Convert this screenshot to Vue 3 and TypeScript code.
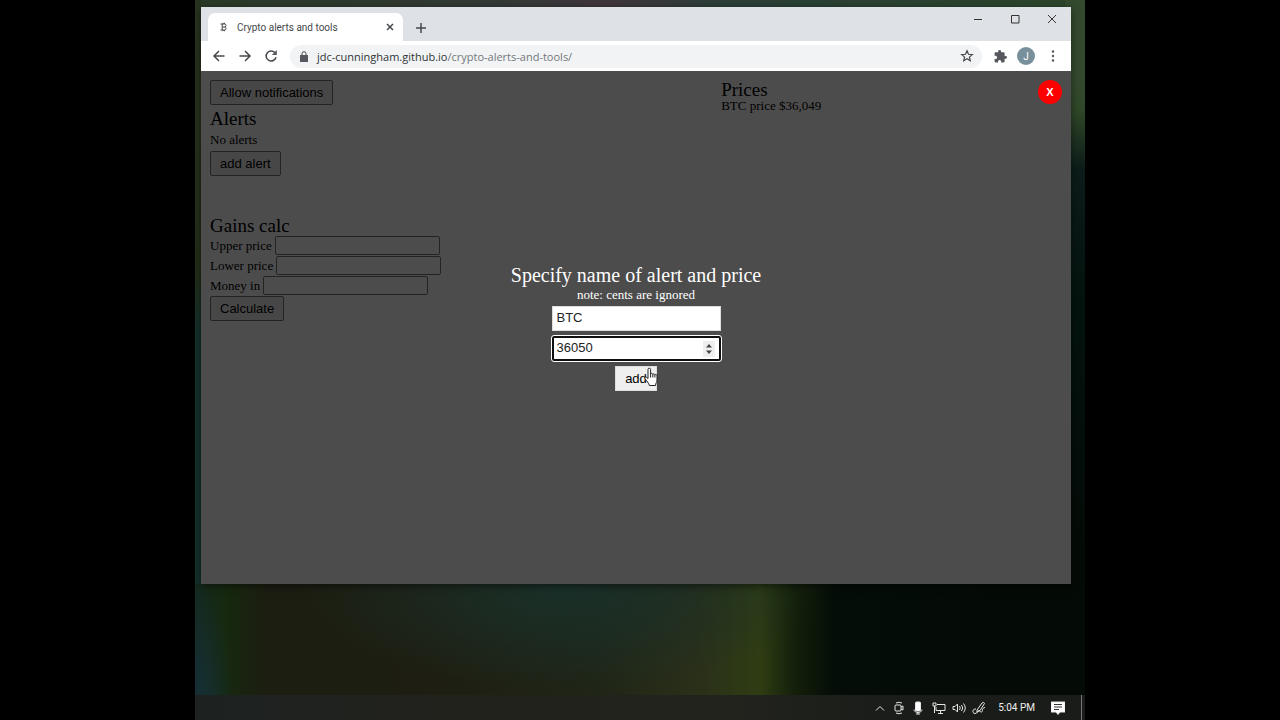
<script setup lang="ts">
import { ref } from 'vue'

const alertName = ref('BTC')
const alertPrice = ref(36050)
const upper = ref('')
const lower = ref('')
const money = ref('')
const url = ref('jdc-cunningham.github.io/crypto-alerts-and-tools/')
</script>

<template>
  <div class="desktop">
    <div class="window">
      <header class="titlebar">
        <div class="tab">
          <svg class="favicon" viewBox="0 0 10 12" width="10" height="12">
            <path d="M1.5 3h4a1.400 1.400 0 0 1 0 3H3.200M5.500 6a1.500 1.500 0 0 1 0 3H1.500M3.200 3v6M4 1.800v1.200M5.500 1.800v1.200M4 9v1.200M5.500 9v1.200" />
          </svg>
          <span class="tab-title">Crypto alerts and tools</span>
          <button class="icon-btn" aria-label="Close tab">
            <svg viewBox="0 0 10 10" width="10" height="10"><path d="M2 2l6 6M8 2l-6 6" /></svg>
          </button>
        </div>
        <button class="icon-btn new-tab" aria-label="New tab">
          <svg viewBox="0 0 12 12" width="12" height="12"><path d="M6 1v10M1 6h10" /></svg>
        </button>
        <div class="window-controls">
          <button class="icon-btn" aria-label="Minimize"><svg viewBox="0 0 10 10" width="10" height="10"><path d="M1 5.500h8" /></svg></button>
          <button class="icon-btn" aria-label="Maximize"><svg viewBox="0 0 10 10" width="10" height="10"><path d="M1.500 1.500h7.500v7.500h-7.500z" /></svg></button>
          <button class="icon-btn" aria-label="Close"><svg viewBox="0 0 10 10" width="10" height="10"><path d="M1 1l8 8M9 1l-8 8" /></svg></button>
        </div>
      </header>

      <nav class="toolbar">
        <button class="icon-btn" aria-label="Back"><svg viewBox="0 0 14 14" width="14" height="14"><path d="M12.500 7H2M7 2L2 7l5 5" /></svg></button>
        <button class="icon-btn" aria-label="Forward"><svg viewBox="0 0 14 14" width="14" height="14"><path d="M1.500 7H12M7 2l5 5-5 5" /></svg></button>
        <button class="icon-btn" aria-label="Reload">
          <svg viewBox="0 0 14 14" width="14" height="14"><path d="M11.300 4.200A5 5 0 1 0 12 8.200" /><path class="solid" d="M12.800 1v5H7.800z" /></svg>
        </button>
        <div class="address">
          <svg class="lock" viewBox="0 0 8 11" width="8" height="11"><path class="solid" d="M0 4h8v7H0z" /><path d="M2 4V2.700a2 2 0 0 1 4 0V4" /></svg>
          <a class="url" :href="'#' + url"><span class="host">jdc-cunningham.github.io</span>/crypto-alerts-and-tools/</a>
          <button class="icon-btn" aria-label="Bookmark">
            <svg viewBox="0 0 14 14" width="14" height="14"><path class="thin" d="M7 1.800l1.500 3.500 3.800.3-2.900 2.500.9 3.700L7 9.800l-3.300 2 .9-3.700-2.900-2.500 3.800-.3z" /></svg>
          </button>
        </div>
        <button class="icon-btn ext" aria-label="Extensions">
          <svg viewBox="1 1 22 22" width="13" height="13"><path class="solid" d="M20.500 11H19V7c0-1.100-.9-2-2-2h-4V3.500a2.500 2.500 0 0 0-5 0V5H4c-1.100 0-2 .9-2 2v3.800h1.500a2.700 2.700 0 0 1 0 5.400H2V20c0 1.100.9 2 2 2h3.800v-1.500a2.700 2.700 0 0 1 5.400 0V22H17c1.100 0 2-.9 2-2v-4h1.500a2.500 2.500 0 0 0 0-5z" /></svg>
        </button>
        <button class="avatar">J</button>
        <button class="icon-btn menu" aria-label="Menu">
          <svg viewBox="0 0 4 14" width="4" height="14"><g class="solid"><circle cx="2" cy="2.500" r="1.200" /><circle cx="2" cy="7" r="1.200" /><circle cx="2" cy="11.500" r="1.200" /></g></svg>
        </button>
      </nav>

      <main class="page">
        <div class="columns">
          <div>
            <button class="btn">Allow notifications</button>
            <h2 class="alerts-title">Alerts</h2>
            <p class="empty">No alerts</p>
            <button class="btn">add alert</button>
            <section class="gains">
              <h2>Gains calc</h2>
              <div class="field"><label for="upper">Upper price</label><input id="upper" v-model="upper" type="text" /></div>
              <div class="field"><label for="lower">Lower price</label><input id="lower" v-model="lower" type="text" /></div>
              <div class="field"><label for="money">Money in</label><input id="money" v-model="money" type="text" /></div>
              <button class="btn">Calculate</button>
            </section>
          </div>
          <section class="prices">
            <h2>Prices</h2>
            <p>BTC price $36,049</p>
          </section>
        </div>

        <form class="overlay" @submit.prevent>
          <button class="dismiss" type="button">X</button>
          <h2>Specify name of alert and price</h2>
          <p>note: cents are ignored</p>
          <input v-model="alertName" type="text" aria-label="Alert name" />
          <div class="number">
            <input v-model="alertPrice" type="number" aria-label="Alert price" />
            <svg class="spinner" viewBox="0 0 12 16" width="12" height="16"><path d="M3 6.500L6 3l3 3.500zM3 9.500h6L6 13z" /></svg>
          </div>
          <div class="submit">
            <button class="btn" type="submit">add</button>
            <svg class="cursor" viewBox="0 0 14 20" width="14" height="20">
              <path d="M4 11.500V2.500a1.300 1.300 0 0 1 2.600 0V7a1.200 1.200 0 0 1 2.200.4 1.200 1.200 0 0 1 2.100.5 1.200 1.200 0 0 1 2.100 1V13c0 2-1.400 3.200-1.500 5.500H5.400C5 16 2.500 14 1 11.500c-.6-1 .6-2 1.500-1.200z" />
              <path d="M6.600 7v3.500M8.800 7.500v3M10.900 8v2.500" />
            </svg>
          </div>
        </form>
      </main>
    </div>

    <footer class="taskbar">
      <svg viewBox="0 0 10 14" width="10" height="14"><path d="M1 9.500l4-4 4 4" /></svg>
      <svg viewBox="0 0 10 14" width="10" height="14"><rect x="1" y="4" width="6" height="6" rx="1" /><path d="M7 6l2-1v4l-2-1M2 2q3-1.500 6 0M2 12q3 1.500 6 0" /></svg>
      <svg viewBox="0 0 10 14" width="10" height="14"><rect class="fill" x="2.500" y="1" width="5" height="9" rx="1" /><path d="M1 8.500c0 4 8 4 8 0M5 11.500V13M3 13h4" /></svg>
      <svg class="wide" viewBox="0 0 14 14" width="14" height="14"><path d="M5 3.500h8v6H4V6M8.500 9.500v3M6 12.500h5M1 2h3v3H1zM2.500 5v7" /></svg>
      <svg class="wide" viewBox="0 0 14 14" width="14" height="14"><path d="M1 5.500h2L5.500 3v8L3 8.500H1zM7.500 5q1.500 2 0 4M9.500 4q2.500 3 0 6M11.500 2.500q3.500 4.500 0 9" /></svg>
      <svg class="wide pen" viewBox="0 0 14 14" width="14" height="14"><path d="M5 9l5-7q2-1.500 2.500.5L8 9.500 5 11zM4 8C0 7.500 0 12.500 3 12.500s2-3 4-3 .5 2 2.500 1.500S9 7 13 6.500" /></svg>
      <time class="clock">5:04 PM</time>
      <svg class="wide notice" viewBox="0 0 14 14" width="14" height="14"><path class="fill" d="M0 1h14v10H9l-2 2.500L5 11H0z" /><path class="lines" d="M3 3.500h8M3 6h8M3 8.500h5" /></svg>
      <span class="show-desktop"></span>
    </footer>
  </div>
</template>

<style>
body { background: #000; }
</style>

<style scoped>
.desktop {
  box-sizing: border-box;
  min-height: 100vh;
  margin: 0 195px;
  display: flex;
  flex-direction: column;
  font-family: "Liberation Serif", "Times New Roman", serif;
  font-size: 13px;
  background:
    linear-gradient(#344a2f 80px, #304828 110px, #0c1c1a 170px, #04130e 300px, #040a06) 100% 0 / 20px 584px no-repeat,
    linear-gradient(#27331f, #242e18 270px, #14302c 330px, #14302c) 0 0 / 6px 584px no-repeat,
    radial-gradient(ellipse 40px 140px at 0 100%, #15303a, transparent) no-repeat,
    radial-gradient(ellipse 260px 100px at 370px 590px, #1a3029, transparent) no-repeat,
    linear-gradient(90deg, #2a3a28, #333a36 35%, #40353c 46%, #2b3f38 60%, #2c452a) 0 0 / 100% 8px no-repeat,
    linear-gradient(90deg, #14291f 0, #17290f 30px, #1b1e11 70px, #1e1e12 230px, #1f2517 400px, #2a2f19 500px, #2f3d13 565px, #131f0a 600px, #040d07 640px, #040a06 100%);
}
h2, p { margin: 0; font-weight: 400; }
h2 { font-size: 19px; line-height: 20px; }
button { margin: 0; cursor: pointer; }
.window {
  flex: 1;
  margin: 7px 14px 111px 6px;
  display: flex;
  flex-direction: column;
  box-shadow: 0 2px 8px rgba(0, 0, 0, 0.5);
}
.icon-btn {
  display: flex;
  align-items: center;
  justify-content: center;
  padding: 0;
  border: 0;
  background: none;
}
.icon-btn svg, .lock, .favicon { fill: none; stroke: #45484c; stroke-width: 1.5; }
.icon-btn .solid, .lock .solid { fill: #55585d; stroke: none; }
.icon-btn .thin { stroke-width: 1.2; }
.titlebar {
  display: flex;
  height: 34px;
  background: #dee1e6;
}
.tab {
  display: flex;
  align-items: center;
  box-sizing: border-box;
  width: 195px;
  margin: 6px 0 0 7px;
  padding: 0 8px 0 11px;
  border-radius: 7px 7px 0 0;
  background: #fff;
  color: #45484c;
}
.favicon { stroke-width: 1; margin-right: 8px; }
.tab-title { flex: 1; font: 10px Roboto, sans-serif; }
.new-tab { width: 12px; margin: 7px 0 0 12px; }
.window-controls { display: flex; margin-left: auto; padding-right: 14px; gap: 27px; height: 24px; }
.window-controls svg { stroke-width: 1; stroke: #333; }
.toolbar {
  display: flex;
  align-items: center;
  height: 30px;
  padding: 0 16px 0 11px;
  gap: 12px;
  background: #fff;
}
.address {
  flex: 1;
  display: flex;
  align-items: center;
  height: 23px;
  padding: 0 8px 0 10px;
  border-radius: 12px;
  background: #f1f3f4;
  font: 11px "Open Sans", sans-serif;
}
.lock { margin-right: 9px; stroke-width: 1; }
.url { flex: 1; color: #74787c; text-decoration: none; }
.host { color: #303336; }
.ext { margin-right: -2px; }
.menu { margin-left: 4px; }
.avatar {
  width: 18px;
  height: 18px;
  padding: 0;
  border: 0;
  border-radius: 50%;
  background: #78909c;
  color: #fff;
  font: 10px Roboto, sans-serif;
}
.page { flex: 1; position: relative; background: #fff; }
.columns { display: grid; grid-template-columns: 3fr 2fr; padding: 9px; }
.btn {
  display: block;
  height: 25px;
  padding: 0 9px;
  border: 1px solid #767676;
  border-radius: 2px;
  background: #efefef;
  color: #000;
  font: 13px "Liberation Sans", Arial, sans-serif;
}
.alerts-title { margin-top: 4px; }
.empty { line-height: 16px; margin: 3px 0; }
.gains { margin-top: 40px; }
.field { display: flex; align-items: center; gap: 3px; margin-bottom: 1px; }
.field input {
  box-sizing: border-box;
  width: 165px;
  height: 19px;
  border: 1px solid #767676;
  border-radius: 2px;
  padding: 1px 4px;
}
.prices h2 { line-height: 19px; }
.prices p { line-height: 14px; }
.overlay {
  position: absolute;
  inset: 0;
  display: flex;
  flex-direction: column;
  align-items: center;
  justify-content: center;
  padding-bottom: 2px;
  background: rgba(0, 0, 0, 0.7);
  color: #fff;
}
.overlay h2 { font-size: 20px; line-height: 24px; }
.overlay p { line-height: 16px; margin-bottom: 3px; }
.overlay input {
  box-sizing: border-box;
  width: 169px;
  height: 25px;
  padding: 0 4px 1px;
  border: 1px solid #ddd;
  background: #fff;
  color: #222;
  font: 13px "Liberation Sans", Arial, sans-serif;
}
.number { position: relative; display: flex; margin: 5px 0; }
.number input {
  border: 2px solid #101010;
  border-radius: 2px;
  padding: 0 3px 1px;
  outline: 1px solid #fff;
  appearance: textfield;
}
.number input::-webkit-inner-spin-button { appearance: none; }
.spinner { position: absolute; right: 6px; top: 5px; background: #efefef; fill: #444; }
.submit { position: relative; }
.submit .btn { border-color: #ddd; border-radius: 0; }
.cursor { position: absolute; left: 29px; top: 1px; fill: #fff; stroke: #222; stroke-width: 1; }
.dismiss {
  position: absolute;
  top: 9px;
  right: 9px;
  width: 24px;
  height: 24px;
  padding: 0;
  border: 0;
  border-radius: 50%;
  background: #f00;
  color: #fff;
  font: bold 11px "Liberation Sans", Arial, sans-serif;
}
.taskbar {
  display: flex;
  align-items: center;
  justify-content: flex-end;
  height: 25px;
  gap: 9px;
  background: linear-gradient(90deg, #1d2221, #22221c 30%, #22231d 60%, #191c19 80%);
  color: #eee;
}
.taskbar svg { fill: none; stroke: #e6e6e6; stroke-width: 1; }
.taskbar .wide { margin-right: -3px; }
.taskbar .pen { margin-right: 0; }
.taskbar .fill { fill: #fff; }
.taskbar .lines { stroke: #333; }
.clock { font: 10px Roboto, sans-serif; margin: 0 7px 0 3px; }
.taskbar .notice { margin: 0 7px 0 0; }
.show-desktop { width: 4px; height: 25px; box-sizing: border-box; border-left: 1px solid #777; }
</style>
